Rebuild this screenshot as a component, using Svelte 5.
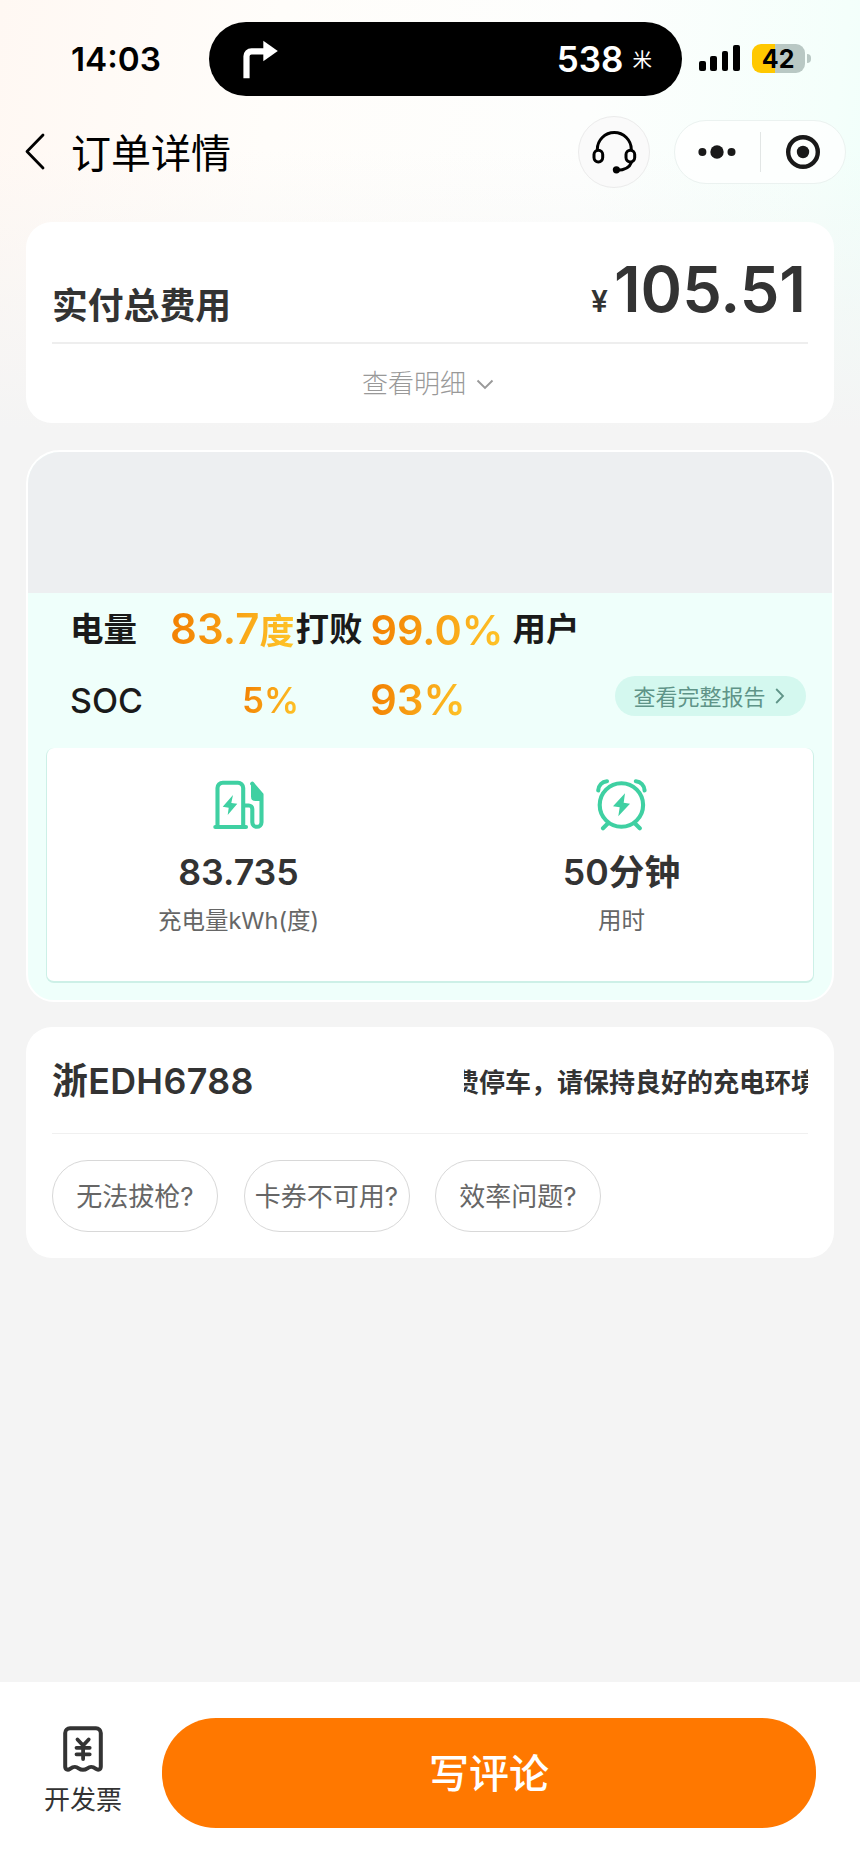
<script>
	const stats = [
		{ icon: 'pump', value: '83.735', label: '充电量kWh(度)' },
		{ icon: 'clock', value: '50分钟', label: '用时' }
	];
	const questions = ['无法拔枪?', '卡券不可用?', '效率问题?'];
	const signal = [10, 15, 20, 26];
</script>

<div class="page">
	<div class="status">
		<span class="time">14:03</span>
		<div class="island">
			<svg width="36" height="39" viewBox="0 0 36 39" aria-hidden="true">
				<path d="M3.5 38.3V16.3a5 5 0 0 1 5-5H22" fill="none" stroke="#fff" stroke-width="6.2" />
				<path d="M20.3.7 34.8 11 20.3 21.3z" fill="#fff" />
			</svg>
			<span class="distance">538</span>
			<span class="unit">米</span>
		</div>
		<div class="signal">
			{#each signal as h}
				<i style="height: {h}px"></i>
			{/each}
		</div>
		<div class="battery"><span>42</span></div>
		<i class="battery-tip"></i>
	</div>

	<header class="nav">
		<svg class="back" width="20" height="37" viewBox="0 0 20 37" aria-hidden="true">
			<path d="M18 2 2 18.5 18 35" fill="none" stroke="#000" stroke-width="2.8" stroke-linecap="round" stroke-linejoin="round" />
		</svg>
		<h1>订单详情</h1>
		<button type="button" class="service" aria-label="客服">
			<svg width="45" height="43" viewBox="0 0 45 43" fill="none" stroke="#000" stroke-width="3" aria-hidden="true">
				<path d="M5.3 19.5v-1a17 17 0 0 1 34 0v1" />
				<rect x="2" y="19.3" width="8.7" height="11.6" rx="4.3" />
				<rect x="34" y="19.3" width="8.7" height="11.6" rx="4.3" />
				<path d="M39.6 31c-1.8 5-6 8.4-15 8.3" />
				<circle cx="24.4" cy="38.8" r="3.6" fill="#000" stroke="none" />
			</svg>
		</button>
		<div class="capsule">
			<svg width="38" height="14" viewBox="0 0 38 14" fill="#191919" aria-hidden="true">
				<circle cx="4.4" cy="7" r="4" />
				<circle cx="19" cy="7" r="6.7" />
				<circle cx="33.5" cy="7" r="4" />
			</svg>
			<i class="capsule-line"></i>
			<svg width="36" height="36" viewBox="0 0 36 36" aria-hidden="true">
				<circle cx="18" cy="18" r="14.8" fill="none" stroke="#191919" stroke-width="4.4" />
				<circle cx="18" cy="18" r="6.2" fill="#191919" />
			</svg>
		</div>
	</header>

	<section class="card total">
		<div class="total-row">
			<h2>实付总费用</h2>
			<p class="amount"><small>¥</small>105.51</p>
		</div>
		<button type="button" class="detail">
			查看明细
			<svg width="18" height="11" viewBox="0 0 18 11" aria-hidden="true">
				<path d="M1.5 1.5 9 9l7.5-7.5" fill="none" stroke="#999" stroke-width="1.9" />
			</svg>
		</button>
	</section>

	<section class="report">
		<div class="banner"></div>
		<div class="line line-power">
			<span class="name">电量</span>
			<span class="hot big">83.7<em>度</em></span>
			<span class="text">打败</span>
			<span class="hot big rank">99.0%</span>
			<span class="text">用户</span>
		</div>
		<div class="line line-soc">
			<span class="name soc">SOC</span>
			<span class="hot from">5%</span>
			<span class="hot big to">93%</span>
			<button type="button" class="full">
				查看完整报告
				<svg width="10" height="16" viewBox="0 0 10 16" aria-hidden="true">
					<path d="M1.2 1 8 8l-6.8 7" fill="none" stroke="#5f9488" stroke-width="1.8" />
				</svg>
			</button>
		</div>
		<div class="stats">
			{#each stats as s (s.icon)}
				<div class="stat">
					{#if s.icon === 'pump'}
						<svg width="51" height="52" viewBox="0 -1 51 52" fill="none" stroke="#3fd0a2" stroke-width="4.1" stroke-linecap="round" stroke-linejoin="round" aria-hidden="true">
							<path d="M4.5 46.5V8a5.3 5.3 0 0 1 5.3-5.3h15A5.3 5.3 0 0 1 30.2 8v38.5M2.3 47H33" />
							<path d="M31 25.5h4.8a3.5 3.5 0 0 1 3.5 3.5v13.2a4.6 4.6 0 0 0 9.2 0V14.6L39.2 3.7" />
							<path d="m39 4 9.6 10.7V20h-6q-3.600 0-3.600-3.600z" fill="#3fd0a2" stroke-width="2" />
							<path d="M20 15 9.7 26.7l6 1L14.7 35l9.6-11.300-6-.7z" fill="#3fd0a2" stroke="none" />
						</svg>
					{:else}
						<svg width="51" height="52" viewBox="0 0 51 52" fill="none" stroke="#3fd0a2" stroke-width="4.1" stroke-linecap="round" aria-hidden="true">
							<circle cx="25.4" cy="26" r="21.7" />
							<path d="M2.2 11.500C2.600 6.200 6 2.800 11 2.300M39.800 2.300c5 .5 8.400 3.900 8.800 9.200" />
							<path d="m12.300 44-5.300 5.300M38.500 44l5.300 5.300" />
							<path d="M29 14.300 17 27.300l6.700 1-1.400 9L34 24.700l-6.300-1z" fill="#3fd0a2" stroke="none" />
						</svg>
					{/if}
					<strong>{s.value}</strong>
					<span>{s.label}</span>
				</div>
			{/each}
		</div>
	</section>

	<section class="card car">
		<div class="car-row">
			<h2 class="plate">浙EDH6788</h2>
			<div class="marquee"><span>费停车，请保持良好的充电环境</span></div>
		</div>
		<div class="chips">
			{#each questions as q}
				<button type="button">{q}</button>
			{/each}
		</div>
	</section>

	<footer>
		<button type="button" class="invoice">
			<svg width="40" height="47" viewBox="0 0 40 47" fill="none" stroke="#333" stroke-width="4" stroke-linecap="round" stroke-linejoin="round" aria-hidden="true">
				<path d="M2.200 40.500V7a4.800 4.800 0 0 1 4.800-4.800h26A4.800 4.800 0 0 1 37.800 7v33.500c0 3-2.500 4-4.800 2.400-3.600-2.600-5.600-2.600-8.600-.6s-5.600 2.200-8.800 0-5-2-8.600.6c-2.300 1.600-4.800.6-4.800-2.400z" />
				<path d="M14.500 13.500l5.600 6 5.600-6M20.100 20v13M13.500 21.800h13.200M13.500 28.300h13.200" stroke-width="3.800" />
			</svg>
			<span>开发票</span>
		</button>
		<button type="button" class="comment">写评论</button>
	</footer>
</div>

<style>
	:global(body) {
		background: #f4f4f4;
	}
	.page {
		box-sizing: border-box;
		width: 860px;
		height: 1864px;
		display: flex;
		flex-direction: column;
		overflow: hidden;
		font-family: Inter, 'Noto Sans CJK SC', sans-serif;
		color: #333;
		background:
			linear-gradient(180deg, rgba(244, 244, 244, 0) 150px, #f4f4f4 430px),
			linear-gradient(97deg, #fff8f3 0, #fffdfa 26%, #fdfefd 55%, #f4fffb 78%, #e4fff8 100%);
	}
	.page * {
		box-sizing: border-box;
	}
	h1,
	h2,
	p {
		margin: 0;
	}
	button {
		padding: 0;
		border: none;
		background: none;
		font: inherit;
		color: inherit;
	}
	svg {
		display: block;
		flex: none;
	}

	.status {
		display: flex;
		align-items: center;
		height: 96px;
		padding: 22px 0 0 71px;
	}
	.time {
		width: 138px;
		font-size: 33.3px;
		font-weight: 600;
		line-height: 74px;
		color: #000;
	}
	.island {
		display: flex;
		align-items: center;
		width: 473px;
		height: 74px;
		padding: 0 30px 0 34px;
		border-radius: 37px;
		background: #000;
		color: #fff;
	}
	.distance {
		margin-left: auto;
		font-size: 35px;
		font-weight: 600;
	}
	.unit {
		margin: 0 0 2px 9px;
		font-size: 19.5px;
	}
	.signal {
		display: flex;
		align-items: flex-end;
		gap: 4.5px;
		height: 26px;
		margin: 0 12px 2px 17px;
	}
	.signal i {
		width: 6.8px;
		border-radius: 2px;
		background: #000;
	}
	.battery {
		width: 53px;
		height: 29px;
		margin-bottom: 2px;
		border-radius: 9px;
		background: linear-gradient(90deg, #ffc800 23px, #b9c8c4 23px);
		color: #000;
		font-size: 25px;
		font-weight: 700;
		line-height: 30px;
		text-align: center;
	}
	.battery-tip {
		width: 4px;
		height: 9px;
		margin: 0 0 2px 2px;
		border-radius: 0 4px 4px 0;
		background: #b9c8c4;
	}

	.nav {
		display: flex;
		align-items: center;
		height: 112px;
		padding: 0 14px 0 25px;
		color: #000;
	}
	.back {
		margin-bottom: 1px;
	}
	h1 {
		margin: 3px 0 0 26px;
		font-size: 40px;
		font-weight: 400;
		line-height: 60px;
	}
	.service {
		display: flex;
		align-items: center;
		justify-content: center;
		width: 72px;
		height: 72px;
		margin: 0 24px 0 auto;
		border: 1px solid #ebebeb;
		border-radius: 50%;
		background: #fafafa;
	}
	.capsule {
		display: flex;
		align-items: center;
		width: 172px;
		height: 64px;
		padding: 0 24px 0 23px;
		border: 1px solid #ebf2f0;
		border-radius: 32px;
		background: rgba(255, 255, 255, 0.75);
	}
	.capsule-line {
		width: 1px;
		height: 40px;
		margin: 0 auto;
		background: #e2e6e5;
	}

	.card {
		margin: 0 26px;
		padding: 0 26px;
		border-radius: 26px;
		background: #fff;
	}
	h2 {
		font-size: 35.8px;
		font-weight: 600;
		line-height: 50px;
	}
	.total {
		height: 201px;
		margin-top: 14px;
	}
	.total-row {
		display: flex;
		align-items: flex-end;
		justify-content: space-between;
		height: 122px;
		padding-bottom: 11px;
		border-bottom: 2px solid #eee;
	}
	.amount {
		padding-right: 2px;
		font-size: 63px;
		font-weight: 600;
		line-height: 60px;
	}
	.amount small {
		margin-right: 6px;
		font-size: 30px;
	}
	.detail {
		display: flex;
		align-items: center;
		justify-content: center;
		gap: 10px;
		width: 100%;
		height: 75px;
		padding-right: 4px;
		font-size: 26px;
		font-weight: 300;
		color: #999;
	}
	.detail svg {
		margin-top: 5px;
	}

	.report {
		height: 552px;
		margin: 27px 26px 0;
		border: 2px solid #fff;
		border-radius: 34px 34px 28px 28px;
		background: #effffb;
		overflow: hidden;
	}
	.banner {
		height: 141px;
		background: #edeff1;
	}
	.line {
		display: flex;
		align-items: center;
		padding-left: 42px;
		color: #1a1a1a;
		font-size: 33.5px;
		font-weight: 600;
		white-space: nowrap;
	}
	.line-power {
		height: 73px;
	}
	.line-power .name,
	.text {
		margin-bottom: 6px;
	}
	.line-soc {
		height: 68px;
	}
	.name {
		width: 100px;
	}
	.soc {
		font-size: 34px;
		font-weight: 500;
	}
	.hot {
		background: linear-gradient(100deg, #f27d00, #ffc629);
		background-clip: text;
		-webkit-background-clip: text;
		color: transparent;
		font-size: 35px;
		font-weight: 600;
		line-height: 50px;
	}
	.big {
		font-size: 42px;
	}
	.hot em {
		font-size: 35px;
		font-style: normal;
	}
	.line-power .hot + .text {
		margin-left: 1px;
	}
	.line-power .rank {
		margin: 0 8px;
		font-size: 41.5px;
	}
	.from {
		width: 56px;
		margin-left: 72px;
	}
	.to {
		margin-left: 72px;
	}
	.full {
		display: flex;
		align-items: center;
		justify-content: center;
		gap: 9px;
		width: 191px;
		height: 40px;
		margin: 0 26px 8px auto;
		padding: 0 3px 3px 0;
		border-radius: 20px;
		background: #d4f8ef;
		color: #5f9488;
		font-size: 22px;
		font-weight: 400;
	}
	.full svg {
		margin-top: 3px;
	}
	.stats {
		display: flex;
		height: 235px;
		margin: 14px 18px 0;
		border: 1px solid #cdf0e7;
		border-top: none;
		border-bottom-width: 2px;
		border-radius: 8px;
		background: #fff;
	}
	.stat {
		flex: 1;
		display: flex;
		flex-direction: column;
		align-items: center;
		padding-top: 31px;
	}
	.stat strong {
		margin-top: 16px;
		font-size: 35.7px;
		font-weight: 600;
		line-height: 50px;
	}
	.stat span {
		margin-top: 6px;
		font-size: 23.5px;
		line-height: 36px;
		color: #666;
	}

	.car {
		height: 231px;
		margin-top: 25px;
	}
	.car-row {
		display: flex;
		align-items: center;
		justify-content: space-between;
		height: 107px;
		border-bottom: 1px solid #f0f0f0;
	}
	.plate {
		margin-top: 2px;
		letter-spacing: 0.35px;
	}
	.marquee {
		display: flex;
		width: 344px;
		overflow: hidden;
		font-size: 26px;
		font-weight: 600;
		white-space: nowrap;
	}
	.marquee span {
		margin-left: -11px;
	}
	.chips {
		display: flex;
		gap: 25.5px;
		padding-top: 26px;
	}
	.chips button {
		width: 166px;
		height: 72px;
		padding-bottom: 3px;
		border: 1px solid #d8d8d8;
		border-radius: 36px;
		color: #666;
		font-size: 26px;
		white-space: nowrap;
	}

	footer {
		display: flex;
		align-items: flex-start;
		height: 182px;
		margin-top: auto;
		padding: 36px 44px 0;
		background: #fff;
	}
	.invoice {
		display: flex;
		flex-direction: column;
		align-items: center;
		width: 78px;
		padding-top: 8px;
		font-size: 26px;
		line-height: 36px;
	}
	.invoice span {
		margin-top: 9px;
	}
	.comment {
		width: 654px;
		height: 110px;
		margin-left: 40px;
		padding-bottom: 4px;
		border-radius: 54px;
		background: #ff7800;
		color: #fff;
		font-size: 40px;
		font-weight: 500;
	}
</style>
